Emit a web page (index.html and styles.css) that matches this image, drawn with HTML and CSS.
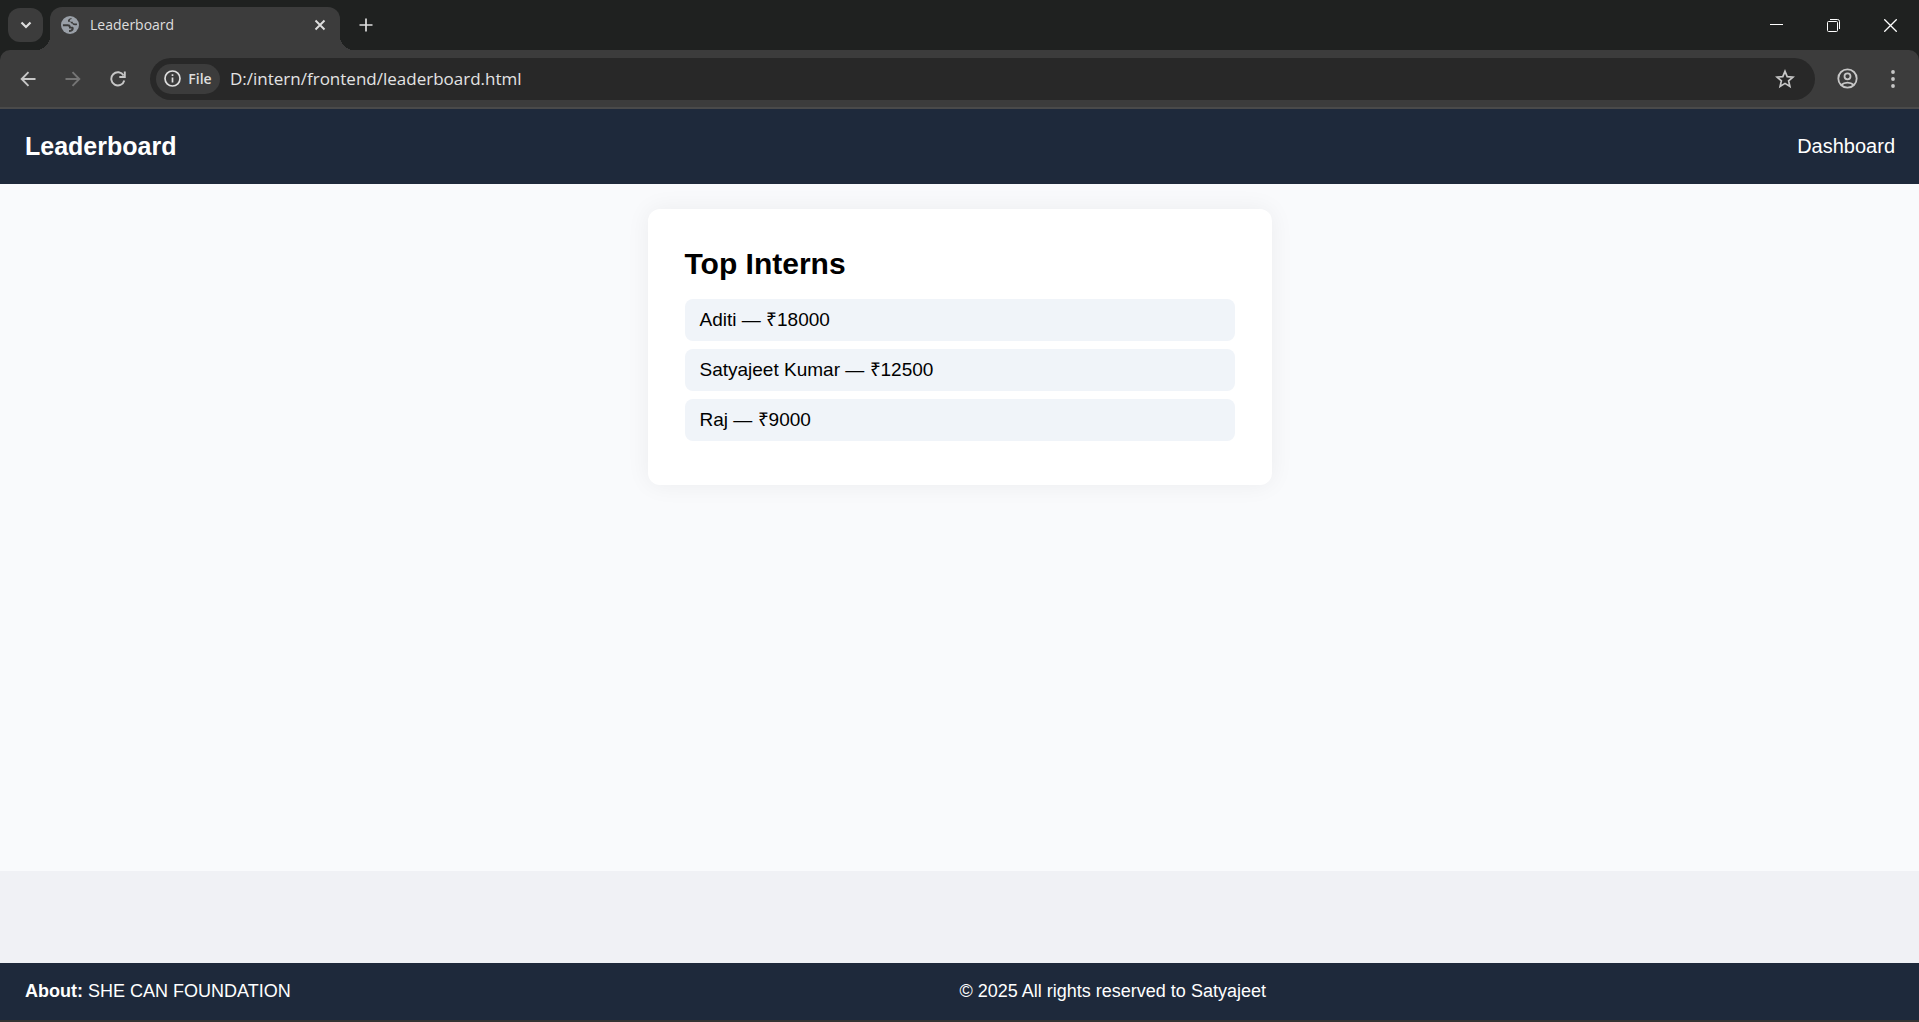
FILE: index.html
```html
<!DOCTYPE html>
<html lang="en">
<head>
<meta charset="utf-8">
<meta name="viewport" content="width=device-width, initial-scale=1">
<title>Leaderboard</title>
<link rel="stylesheet" href="styles.css">
</head>
<body>
<div class="browser">
  <div class="tab-strip">
    <button class="tab-search" type="button" aria-label="Search tabs">
      <svg width="12" height="8" viewBox="0 0 12 8"><path d="M1.500 1.500 6 6l4.500-4.500" fill="none" stroke="currentColor" stroke-width="2.200"/></svg>
    </button>
    <div class="tab">
      <svg class="favicon" width="18" height="18" viewBox="0 0 18 18">
        <circle cx="9" cy="9" r="9" fill="#9aa0a8"/>
        <path d="M10.500 2C8 2.300 6.500 4 7 5.700h2.500c0 1.500 1 1.800 2 1.800 0 1.500 1.500 2 4.600 1.500a7 7 0 0 0-.2-1.600h-2.500c-1.200 0-1.700-.8-1.700-1.700h-1.600c-.9 0-1.300-.6-1.300-1.200 0-.9.8-1.400 1.800-1.500zM1.900 8.300v2h4.600c1 0 1.500.5 1.500 1.500v.8h2.600c-.2 1.200-1.100 1.500-2.600 1.500v1.900c3 0 4.700-1.500 4.700-3.600 0-1-.5-1.600-1.500-1.600H9.800c-.2-1.700-1.300-2.500-3-2.500z" fill="#3c3c3c"/>
      </svg>
      <span class="tab-title">Leaderboard</span>
      <button class="tab-close" type="button" aria-label="Close tab">
        <svg width="12" height="12" viewBox="0 0 12 12"><path d="m1.500 1.500 9 9m0-9-9 9" stroke="currentColor" stroke-width="1.900"/></svg>
      </button>
    </div>
    <button class="new-tab" type="button" aria-label="New tab">
      <svg width="14" height="14" viewBox="0 0 14 14"><path d="M7 .5v13M.5 7h13" stroke="currentColor" stroke-width="1.700"/></svg>
    </button>
    <div class="window-controls">
      <button type="button" aria-label="Minimize"><svg width="13" height="13" viewBox="0 0 13 13"><path d="M0 5.500h13" stroke="currentColor"/></svg></button>
      <button type="button" aria-label="Restore"><svg width="13" height="13" viewBox="0 0 13 13" fill="none" stroke="currentColor"><rect x=".5" y="2.500" width="10" height="10" rx="1"/><path d="M3 .5h7.500a2 2 0 0 1 2 2V10"/></svg></button>
      <button type="button" aria-label="Close"><svg width="13" height="13" viewBox="0 0 13 13"><path d="m.3.3 12.400 12.400m0-12.400L.3 12.700" stroke="currentColor" stroke-width="1.300"/></svg></button>
    </div>
  </div>
  <div class="toolbar">
    <div class="nav-buttons">
      <button class="tool" type="button" aria-label="Back"><svg width="16" height="16" viewBox="0 0 16 16" fill="none" stroke="currentColor" stroke-width="1.900"><path d="M15.500 8H2M8.500 1.200 1.700 8l6.800 6.800"/></svg></button>
      <button class="tool tool-off" type="button" aria-label="Forward"><svg width="16" height="16" viewBox="0 0 16 16" fill="none" stroke="currentColor" stroke-width="1.900"><path d="M.5 8H14M7.500 1.200 14.300 8l-6.800 6.800"/></svg></button>
      <button class="tool" type="button" aria-label="Reload"><svg width="16" height="16" viewBox="0 0 16 16" fill="none" stroke="currentColor" stroke-width="1.900"><path d="M14.300 9.500A6.600 6.600 0 1 1 13.600 4.500"/><path d="M14.800.5V6H9.300"/></svg></button>
    </div>
    <div class="omnibox">
      <button class="chip" type="button">
        <svg width="17" height="17" viewBox="0 0 17 17"><circle cx="8.500" cy="8.500" r="7.500" fill="none" stroke="currentColor" stroke-width="1.700"/><path d="M8.500 7.500v5M8.500 4.300v1.800" stroke="currentColor" stroke-width="1.700"/></svg>
        File
      </button>
      <input class="address" type="text" aria-label="Address" value="D:/intern/frontend/leaderboard.html">
      <button class="tool" type="button" aria-label="Bookmark this page"><svg width="20" height="20" viewBox="0 0 20 20"><path d="m10 2.300 2.200 5.300 5.700.5-4.300 3.700 1.300 5.600-4.900-3-4.900 3 1.300-5.600-4.300-3.700 5.700-.5z" fill="none" stroke="currentColor" stroke-width="1.700"/></svg></button>
    </div>
    <div class="nav-buttons">
      <button class="tool" type="button" aria-label="Profile"><svg width="21" height="21" viewBox="0 0 21 21" fill="none" stroke="currentColor" stroke-width="1.800"><circle cx="10.500" cy="10.500" r="9.200"/><circle cx="10.500" cy="8.300" r="3"/><path d="M4.200 17c1.800-1.700 4-2.400 6.300-2.400s4.500.7 6.300 2.400"/></svg></button>
      <button class="tool" type="button" aria-label="Menu"><svg width="4" height="18" viewBox="0 0 4 18" fill="currentColor"><circle cx="2" cy="2" r="1.900"/><circle cx="2" cy="9" r="1.900"/><circle cx="2" cy="16" r="1.900"/></svg></button>
    </div>
  </div>
</div>

<header class="site-header">
  <h1>Leaderboard</h1>
  <nav><a href="#dashboard">Dashboard</a></nav>
</header>

<main class="content">
  <section class="card">
    <h2>Top Interns</h2>
    <ul class="ranking">
      <li>Aditi — ₹18000</li>
      <li>Satyajeet Kumar — ₹12500</li>
      <li>Raj — ₹9000</li>
    </ul>
  </section>
</main>

<div class="band"></div>

<footer class="site-footer">
  <p><strong>About:</strong> SHE CAN FOUNDATION</p>
  <p>© 2025 All rights reserved to Satyajeet</p>
</footer>
</body>
</html>
```
FILE: styles.css
```css
* {
  box-sizing: border-box;
}

body {
  margin: 0;
  min-height: 100vh;
  display: flex;
  flex-direction: column;
  background: #f9fafc;
  color: #000;
  font-family: "Liberation Sans", Arial, sans-serif;
}

h1, h2, p, ul {
  margin: 0;
  padding: 0;
}

button {
  display: inline-flex;
  align-items: center;
  justify-content: center;
  flex: none;
  padding: 0;
  border: 0;
  background: none;
  color: inherit;
  font: inherit;
}

/* Browser window */

.browser {
  background: #1f2120;
  color: #dedede;
  font-family: "Open Sans", "Segoe UI", sans-serif;
}

.tab-strip {
  display: flex;
  align-items: center;
  height: 50px;
  padding-left: 8px;
}

.tab-search {
  width: 35px;
  height: 34px;
  border-radius: 12px;
  background: #3c3c3c;
}

.tab {
  position: relative;
  display: flex;
  align-items: center;
  align-self: flex-end;
  gap: 11px;
  width: 290px;
  height: 43px;
  margin-left: 7px;
  padding: 0 10px 7px 11px;
  border-radius: 12px 12px 0 0;
  background: #3c3c3c;
}

.tab::before,
.tab::after {
  content: "";
  position: absolute;
  bottom: 0;
  width: 14px;
  height: 14px;
}

.tab::before {
  right: 100%;
  background: radial-gradient(circle at 0 0, transparent 14px, #3c3c3c 14px);
}

.tab::after {
  left: 100%;
  background: radial-gradient(circle at 100% 0, transparent 14px, #3c3c3c 14px);
}

.tab-title {
  flex: 1;
  font-size: 14px;
  line-height: 20px;
}

.tab-close {
  width: 20px;
  height: 20px;
}

.new-tab {
  width: 34px;
  height: 34px;
  margin-left: 9px;
}

.window-controls {
  display: flex;
  align-self: stretch;
  margin-left: auto;
  color: #fff;
}

.window-controls button {
  width: 57px;
}

.toolbar {
  display: flex;
  align-items: center;
  gap: 15px;
  height: 59px;
  padding: 0 9px 0 10px;
  border-bottom: 2px solid #4a4a4a;
  border-radius: 10px 10px 0 0;
  background: #3c3c3c;
}

.nav-buttons {
  display: flex;
  gap: 10px;
}

.tool {
  width: 35px;
  height: 35px;
  color: #c7c7c7;
}

.tool-off {
  color: #757575;
}

.omnibox {
  display: flex;
  flex: 1;
  align-items: center;
  height: 42px;
  padding: 0 13px 0 6px;
  border-radius: 21px;
  background: #282828;
}

.chip {
  gap: 7px;
  width: 64px;
  height: 30px;
  border-radius: 15px;
  background: #3c3c3c;
  font-size: 14px;
  font-weight: 600;
}

.address {
  flex: 1;
  min-width: 0;
  padding: 0 10px;
  border: 0;
  outline: 0;
  background: none;
  color: #e3e3e3;
  font-family: inherit;
  font-size: 17px;
  line-height: 24px;
}

/* Page */

.site-header {
  display: flex;
  align-items: center;
  justify-content: space-between;
  padding: 20px 24px 20px 25px;
  background: #1e293b;
  color: #fff;
}

.site-header h1 {
  font-size: 25px;
  line-height: 35px;
}

.site-header a {
  color: inherit;
  font-size: 20px;
  text-decoration: none;
}

.content {
  flex: 1;
  padding: 25px;
}

.card {
  max-width: 624px;
  margin: 0 auto;
  padding: 37px;
  border-radius: 12px;
  background: #fff;
  box-shadow: 0 0 25px rgba(0, 0, 0, 0.06);
}

.card h2 {
  margin-bottom: 18px;
  font-size: 30px;
  line-height: 35px;
}

.ranking {
  display: flex;
  flex-direction: column;
  gap: 8px;
  padding-bottom: 7px;
  list-style: none;
}

.ranking li {
  padding: 10px 15px;
  border-radius: 8px;
  background: #f0f4f9;
  font-size: 19px;
  line-height: 22px;
}

.band {
  height: 92px;
  background: #f0f1f5;
}

.site-footer {
  display: grid;
  grid-template-columns: 1fr 1fr;
  padding: 17px 25px 18px;
  border-bottom: 2px solid #333;
  background: #1e293b;
  color: #fff;
  font-size: 18px;
  line-height: 22px;
}
```
